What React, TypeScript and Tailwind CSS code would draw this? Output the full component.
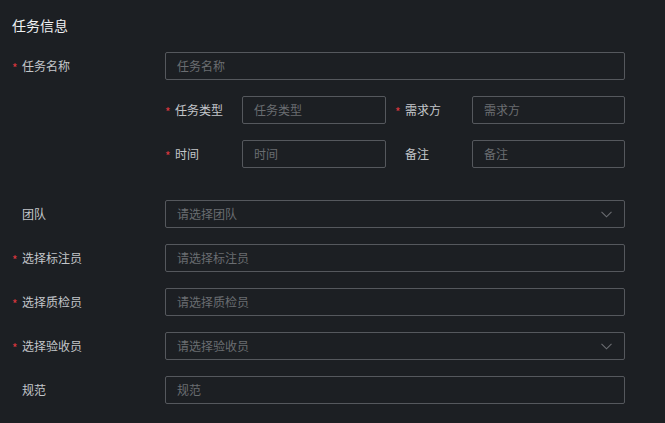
import { ReactNode } from 'react';

const font = { fontFamily: '"Noto Sans CJK SC", "Noto Sans", sans-serif' };

const Star = ({ show }: { show?: boolean }) => (
  <span className="inline-block w-[10px] translate-y-[2px] text-[12px] leading-none text-[#d9363e]">
    {show ? '*' : ''}
  </span>
);

const Field = ({
  placeholder,
  select,
  className = '',
}: {
  placeholder: string;
  select?: boolean;
  className?: string;
}) => (
  <div
    className={`flex h-[28px] items-center justify-between rounded-[2px] border border-[#55585d] pl-[11px] pr-[12px] text-[12px] text-[#6a6d71] ${className}`}
  >
    <span>{placeholder}</span>
    {select && (
      <svg width="11" height="7" viewBox="0 0 11 7" fill="none">
        <path d="M0.5 0.8 L5.5 5.8 L10.5 0.8" stroke="#6a6d71" strokeWidth="1.1" />
      </svg>
    )}
  </div>
);

const Row = ({ label, required, children }: { label: string; required?: boolean; children: ReactNode }) => (
  <div className="flex items-center">
    <div className="flex w-[153px] items-center text-[12px] text-[#c3c6ca]">
      <Star show={required} />
      <span>{label}</span>
    </div>
    <div className="w-[460px]">{children}</div>
  </div>
);

const SubCell = ({ label, required, placeholder, width }: { label: string; required?: boolean; placeholder: string; width: string }) => (
  <div className="flex items-center">
    <div className="flex w-[77px] items-center text-[12px] text-[#c3c6ca]">
      <Star show={required} />
      <span>{label}</span>
    </div>
    <Field placeholder={placeholder} className={width} />
  </div>
);

export default function App() {
  return (
    <div className="h-[423px] w-[665px] bg-[#1c1f23] pl-[12px] pt-[15px]" style={font}>
      <h2 className="text-[14px] leading-[20px] font-normal text-[#eef0f2]">任务信息</h2>
      <div className="mt-[17px] flex flex-col gap-[16px]">
        <Row label="任务名称" required>
          <Field placeholder="任务名称" />
        </Row>
        <div className="ml-[153px] flex flex-col gap-[16px]">
          <div className="flex gap-[9px]">
            <SubCell label="任务类型" required placeholder="任务类型" width="w-[144px]" />
            <SubCell label="需求方" required placeholder="需求方" width="w-[153px]" />
          </div>
          <div className="flex gap-[9px]">
            <SubCell label="时间" required placeholder="时间" width="w-[144px]" />
            <SubCell label="备注" placeholder="备注" width="w-[153px]" />
          </div>
        </div>
        <div className="mt-[16px]">
          <Row label="团队">
            <Field placeholder="请选择团队" select />
          </Row>
        </div>
        <Row label="选择标注员" required>
          <Field placeholder="请选择标注员" />
        </Row>
        <Row label="选择质检员" required>
          <Field placeholder="请选择质检员" />
        </Row>
        <Row label="选择验收员" required>
          <Field placeholder="请选择验收员" select />
        </Row>
        <Row label="规范">
          <Field placeholder="规范" />
        </Row>
      </div>
    </div>
  );
}
